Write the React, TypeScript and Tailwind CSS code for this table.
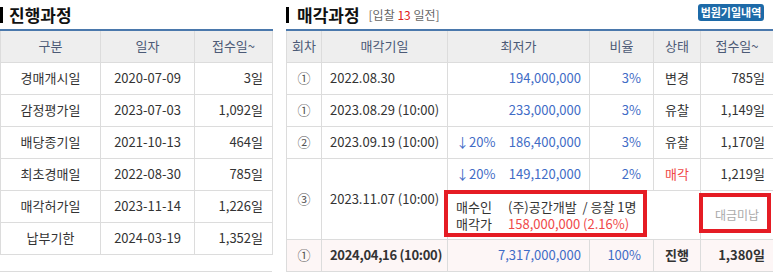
const steps = [
  { name: "경매개시일", date: "2020-07-09", days: "3일" },
  { name: "감정평가일", date: "2023-07-03", days: "1,092일" },
  { name: "배당종기일", date: "2021-10-13", days: "464일" },
  { name: "최초경매일", date: "2022-08-30", days: "785일" },
  { name: "매각허가일", date: "2023-11-14", days: "1,226일" },
  { name: "납부기한", date: "2024-03-19", days: "1,352일" },
]

const th = "h-[32px] border border-[#dcdcdc] border-t-2 border-t-[#4a78ac] bg-[#eeeeee] font-normal text-[#4c5a76]"
const td = "h-[32px] border border-[#dcdcdc]"

function Title({ children }: { children: React.ReactNode }) {
  return (
    <div className="flex h-[29px] items-center">
      <span className="h-[16px] w-[3px] bg-black" />
      {children}
    </div>
  )
}

export default function App() {
  return (
    <div className="flex w-[773px] bg-white font-['Noto_Sans_CJK_KR','Noto_Sans',sans-serif] text-[13px] leading-[16px] text-[#333]">
      {/* 진행과정 */}
      <div className="w-[272px]">
        <Title>
          <span className="ml-[6px] text-[17px] font-bold leading-[20px] text-[#111]">진행과정</span>
        </Title>
        <table className="w-[272px] table-fixed border-collapse">
          <colgroup>
            <col className="w-[100px]" />
            <col className="w-[94px]" />
            <col className="w-[78px]" />
          </colgroup>
          <thead>
            <tr>
              <th className={th}>구분</th>
              <th className={th}>일자</th>
              <th className={th}>접수일~</th>
            </tr>
          </thead>
          <tbody>
            {steps.map((s) => (
              <tr key={s.name}>
                <td className={`${td} text-center`}>{s.name}</td>
                <td className={`${td} text-center`}>{s.date}</td>
                <td className={`${td} pr-[9px] text-right`}>{s.days}</td>
              </tr>
            ))}
          </tbody>
        </table>
        <div className="mt-[16px] border-t border-[#dcdcdc]" />
      </div>

      {/* 매각과정 */}
      <div className="ml-[14px] flex-1">
        <div className="flex items-center justify-between">
          <Title>
            <span className="ml-[8px] text-[17px] font-bold leading-[20px] text-[#111]">매각과정</span>
            <span className="ml-[9px] text-[12px] text-[#666]">
              [입찰 <span className="text-[#e02020]">13</span> 일전]
            </span>
          </Title>
          <button
            type="button"
            className="mr-[10px] mb-[5px] h-[17px] w-[66px] rounded-[3px] bg-[#1d6aa8] text-[11px] leading-[17px] font-bold text-white"
          >
            법원기일내역
          </button>
        </div>
        <table className="w-[487px] table-fixed border-collapse">
          <colgroup>
            <col className="w-[35px]" />
            <col className="w-[126px]" />
            <col className="w-[142px]" />
            <col className="w-[64px]" />
            <col className="w-[47px]" />
            <col className="w-[73px]" />
          </colgroup>
          <thead>
            <tr>
              <th className={th}>회차</th>
              <th className={th}>매각기일</th>
              <th className={th}>최저가</th>
              <th className={th}>비율</th>
              <th className={th}>상태</th>
              <th className={th}>접수일~</th>
            </tr>
          </thead>
          <tbody>
            <tr>
              <td className={`${td} text-center text-[#555]`}>①</td>
              <td className={`${td} pl-[8px]`}>2022.08.30</td>
              <td className={`${td} pr-[8px] text-right text-[#3f6cc6]`}>194,000,000</td>
              <td className={`${td} pr-[12px] text-right text-[#3f6cc6]`}>3%</td>
              <td className={`${td} text-center`}>변경</td>
              <td className={`${td} pr-[8px] text-right`}>785일</td>
            </tr>
            <tr>
              <td className={`${td} text-center text-[#555]`}>①</td>
              <td className={`${td} pl-[8px]`}>2023.08.29 (10:00)</td>
              <td className={`${td} pr-[8px] text-right text-[#3f6cc6]`}>233,000,000</td>
              <td className={`${td} pr-[12px] text-right text-[#3f6cc6]`}>3%</td>
              <td className={`${td} text-center`}>유찰</td>
              <td className={`${td} pr-[8px] text-right`}>1,149일</td>
            </tr>
            <tr>
              <td className={`${td} text-center text-[#555]`}>②</td>
              <td className={`${td} pl-[8px]`}>2023.09.19 (10:00)</td>
              <td className={`${td} px-[8px] text-[#3f6cc6]`}>
                <div className="flex justify-between">
                  <span>↓20%</span>
                  <span>186,400,000</span>
                </div>
              </td>
              <td className={`${td} pr-[12px] text-right text-[#3f6cc6]`}>3%</td>
              <td className={`${td} text-center`}>유찰</td>
              <td className={`${td} pr-[8px] text-right`}>1,170일</td>
            </tr>
            <tr>
              <td rowSpan={2} className="border border-[#dcdcdc] text-center text-[#555]">③</td>
              <td rowSpan={2} className="border border-[#dcdcdc] pl-[8px]">2023.11.07 (10:00)</td>
              <td className={`${td} px-[8px] text-[#3f6cc6]`}>
                <div className="flex justify-between">
                  <span>↓20%</span>
                  <span>149,120,000</span>
                </div>
              </td>
              <td className={`${td} pr-[12px] text-right text-[#3f6cc6]`}>2%</td>
              <td className={`${td} text-center text-[#f04848]`}>매각</td>
              <td className={`${td} pr-[8px] text-right`}>1,219일</td>
            </tr>
            <tr>
              <td colSpan={3} className="relative h-[49px] border border-[#dcdcdc] pl-[8px]">
                <div className="flex flex-col gap-[1px] pt-[1px]">
                  <div className="flex">
                    <span className="w-[52px]">매수인</span>
                    <span>(주)공간개발&nbsp; / 응찰 1명</span>
                  </div>
                  <div className="flex">
                    <span className="w-[52px]">매각가</span>
                    <span className="text-[#f04848]">158,000,000 (2.16%)</span>
                  </div>
                </div>
                <span className="absolute top-[-1px] left-[-4px] h-[47px] w-[203px] border-4 border-[#e51c24]" />
              </td>
              <td className="relative border border-[#dcdcdc] text-center text-[12px] text-[#aaa]">
                대금미납
                <span className="absolute top-[2px] left-[-2px] h-[40px] w-[72px] border-4 border-[#e51c24]" />
              </td>
            </tr>
            <tr className="bg-[#fdf6f6]">
              <td className={`${td} text-center text-[#555]`}>①</td>
              <td className={`${td} pl-[8px] font-bold whitespace-nowrap tracking-[-0.3px]`}>2024,04,16 (10:00)</td>
              <td className={`${td} pr-[8px] text-right text-[#3f6cc6]`}>7,317,000,000</td>
              <td className={`${td} pr-[12px] text-right text-[#3f6cc6]`}>100%</td>
              <td className={`${td} text-center font-bold`}>진행</td>
              <td className={`${td} pr-[8px] text-right font-bold`}>1,380일</td>
            </tr>
          </tbody>
        </table>
      </div>
    </div>
  )
}
